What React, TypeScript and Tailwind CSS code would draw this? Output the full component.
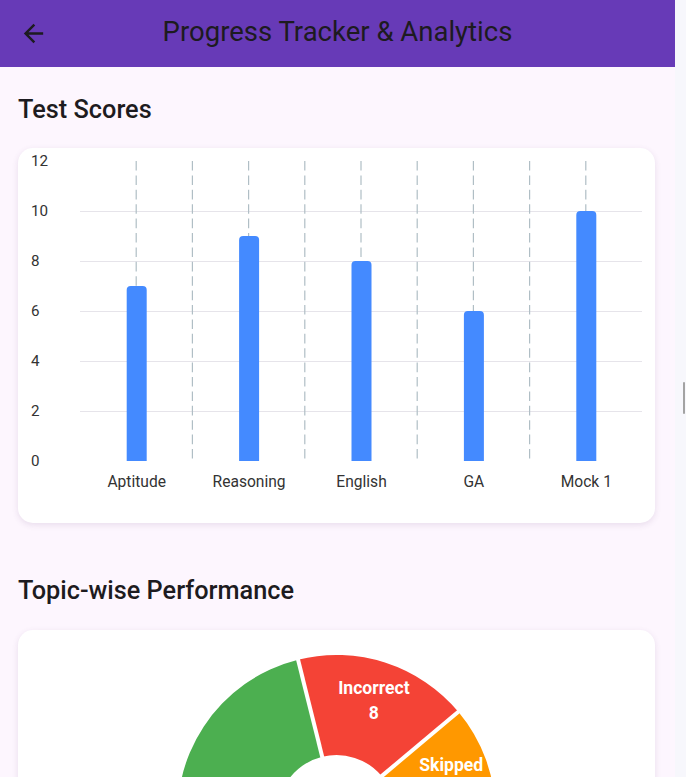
import React from "react";

const scores = [
  { label: "Aptitude", value: 7 },
  { label: "Reasoning", value: 9 },
  { label: "English", value: 8 },
  { label: "GA", value: 6 },
  { label: "Mock 1", value: 10 },
];

const font = "Roboto, 'Noto Sans', sans-serif";

function ScoreChart() {
  const left = 62;
  const right = 624;
  const step = (right - left) / 10;
  const zero = 313;
  const unit = 25;
  const y = (v: number) => zero - v * unit;

  return (
    <svg width="637" height="375" viewBox="0 0 637 375" style={{ fontFamily: font }}>
      {[2, 4, 6, 8, 10].map((v) => (
        <line key={v} x1={left} x2={right} y1={y(v) + 0.5} y2={y(v) + 0.5} stroke="#e6e4ea" strokeWidth="1" />
      ))}
      {Array.from({ length: 9 }, (_, j) => left + step * (j + 1)).map((x, j) => (
        <line
          key={j}
          x1={x}
          x2={x}
          y1={y(12)}
          y2={zero}
          stroke="#b0bec5"
          strokeWidth="1.2"
          strokeDasharray="9.6 4.8"
        />
      ))}
      {[0, 2, 4, 6, 8, 10, 12].map((v) => (
        <text key={v} x="13" y={y(v)} dominantBaseline="central" fontSize="15.2" fill="#333">
          {v}
        </text>
      ))}
      {scores.map((s, i) => {
        const cx = left + step * (2 * i + 1);
        const top = y(s.value);
        const w = 20;
        const r = 4;
        const x0 = cx - w / 2 + 0.5;
        const d = `M${x0} ${zero} V${top + r} Q${x0} ${top} ${x0 + r} ${top} H${x0 + w - r} Q${x0 + w} ${top} ${x0 + w} ${top + r} V${zero} Z`;
        return (
          <g key={s.label}>
            <path d={d} fill="#448aff" />
            <text x={cx + 0.5} y="334" textAnchor="middle" dominantBaseline="central" fontSize="15.6" fill="#333">
              {s.label}
            </text>
          </g>
        );
      })}
    </svg>
  );
}

const slices = [
  { label: "Correct", value: 32, color: "#4caf50" },
  { label: "Incorrect", value: 8, color: "#f44336" },
  { label: "Skipped", value: 5, color: "#ff9800" },
];

function pt(cx: number, cy: number, rad: number, deg: number) {
  const a = (deg * Math.PI) / 180;
  return [cx + rad * Math.cos(a), cy + rad * Math.sin(a)];
}

function TopicPie() {
  const cx = 318.5;
  const cy = 184;
  const R = 159;
  const r = 59;
  const total = slices.reduce((n, s) => n + s.value, 0);
  let start = 0;

  const parts = slices.map((s) => {
    const sweep = (s.value / total) * 360;
    const end = start + sweep;
    const large = sweep > 180 ? 1 : 0;
    const [ox1, oy1] = pt(cx, cy, R, start);
    const [ox2, oy2] = pt(cx, cy, R, end);
    const [ix2, iy2] = pt(cx, cy, r, end);
    const [ix1, iy1] = pt(cx, cy, r, start);
    const d = `M${ox1} ${oy1} A${R} ${R} 0 ${large} 1 ${ox2} ${oy2} L${ix2} ${iy2} A${r} ${r} 0 ${large} 0 ${ix1} ${iy1} Z`;
    const [lx, ly] = pt(cx, cy, 121, start + sweep / 2 + (s.label === "Skipped" ? 1.5 : 0));
    const part = { ...s, d, start, lx, ly: ly + 2 };
    start = end;
    return part;
  });

  return (
    <svg width="637" height="380" viewBox="0 0 637 380" style={{ fontFamily: font }}>
      {parts.map((p) => (
        <path key={p.label} d={p.d} fill={p.color} />
      ))}
      {parts.map((p) => {
        const [x1, y1] = pt(cx, cy, r - 2, p.start);
        const [x2, y2] = pt(cx, cy, R + 2, p.start);
        return <line key={p.label} x1={x1} y1={y1} x2={x2} y2={y2} stroke="#fff" strokeWidth="4" />;
      })}
      {parts.map((p) => (
        <text key={p.label} textAnchor="middle" fontSize="17.6" fontWeight="700" fill="#fff">
          <tspan x={p.lx} y={p.ly - 12.5} dominantBaseline="central">
            {p.label}
          </tspan>
          <tspan x={p.lx} y={p.ly + 12.5} dominantBaseline="central">
            {p.value}
          </tspan>
        </text>
      ))}
    </svg>
  );
}

export default function App() {
  return (
    <div className="flex min-h-[777px] bg-[#f7f7fc]" style={{ fontFamily: font }}>
      <div className="w-[675px] bg-[#fdf6fe]">
        <header className="flex h-[67px] items-center bg-[#673ab7] text-[#1d1b20]">
          <button type="button" aria-label="Back" className="flex h-[67px] w-[67px] items-center justify-center">
            <svg width="29" height="29" viewBox="0 0 24 24" fill="#1d1b20">
              <path d="M20 11H7.83l5.59-5.59L12 4l-8 8 8 8 1.41-1.41L7.83 13H20v-2z" />
            </svg>
          </button>
          <h1 className="-mt-[4px] flex-1 pr-[67px] text-center text-[27.5px] font-normal">
            Progress Tracker &amp; Analytics
          </h1>
        </header>

        <main className="pl-[18px] pr-[20px]">
          <h2 className="mt-[27px] text-[25.3px] font-medium leading-[32px] text-[#1d1b20]">Test Scores</h2>
          <div className="mt-[22px] h-[375px] rounded-[15px] bg-white shadow-[0_2px_6px_rgba(80,40,110,0.12)]">
            <ScoreChart />
          </div>

          <h2 className="mt-[52px] text-[25.3px] font-medium leading-[32px] text-[#1d1b20]">
            Topic-wise Performance
          </h2>
          <div className="mt-[23px] h-[380px] rounded-[15px] bg-white shadow-[0_2px_6px_rgba(80,40,110,0.12)]">
            <TopicPie />
          </div>
        </main>
      </div>

      <div className="relative w-[11px]">
        <div className="absolute left-[8px] top-[382px] h-[32px] w-[2px] rounded-full bg-[#a3a3a3]" />
      </div>
    </div>
  );
}
